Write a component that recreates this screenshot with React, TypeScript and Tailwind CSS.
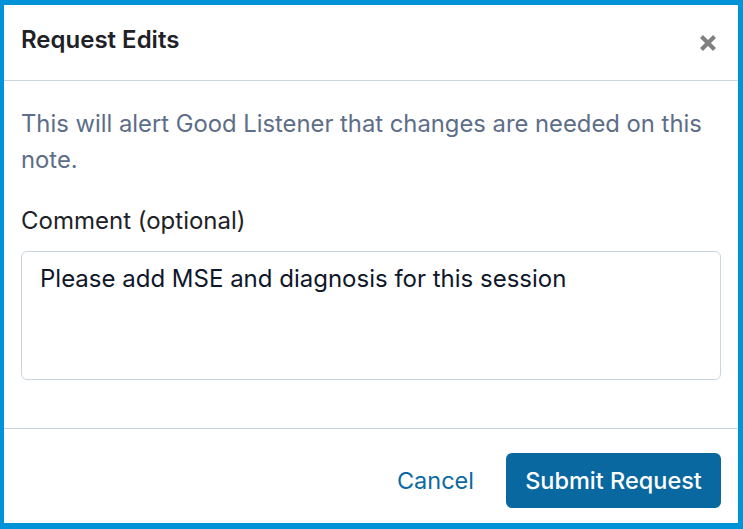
import { useState } from "react";

export default function App() {
  const [comment, setComment] = useState("Please add MSE and diagnosis for this session");

  return (
    <div className="h-[529px] w-[743px] overflow-hidden bg-white border-[#0093d8] border-l-4 border-t-[5px] border-r-[5px] border-b-[6px] font-['Inter','Liberation_Sans',sans-serif]">
      <header className="flex h-[76px] items-center justify-between border-b border-[#cbd5e1] pb-[6px] pl-[17px] pr-[18px]">
        <h2 className="text-[24px] font-semibold text-[#1e2227]">Request Edits</h2>
        <button className="mt-[6px] flex h-6 w-6 items-center justify-center text-[#808080]">
          <svg width="18" height="18" viewBox="0 0 18 18">
            <path d="M2.5 2.5 L15.5 15.5 M15.5 2.5 L2.5 15.5" stroke="currentColor" strokeWidth="4.2" />
          </svg>
        </button>
      </header>

      <main className="px-[17px] pt-[25px] pb-[48px]">
        <p className="text-[23.8px] leading-[36px] text-[#5d6e88]">
          This will alert Good Listener that changes are needed on this note.
        </p>
        <label className="mt-[25px] block text-[24px] leading-[36px] text-[#1e2227]">Comment (optional)</label>
        <textarea
          value={comment}
          onChange={(e) => setComment(e.target.value)}
          className="mt-[12px] block h-[129px] w-full resize-none rounded-md border border-[#cbd5e1] px-[18px] py-[9px] text-[24px] leading-[36px] text-[#0f172a] outline-none"
        />
      </main>

      <footer className="flex items-start justify-end gap-[32px] border-t border-[#cbd5e1] px-[17px] pt-[24px]">
        <button className="h-[55px] text-[23.5px] text-[#0a6aa1]">Cancel</button>
        <button className="h-[55px] w-[215px] rounded-md bg-[#08689f] text-[23.5px] font-medium text-white">
          Submit Request
        </button>
      </footer>
    </div>
  );
}
